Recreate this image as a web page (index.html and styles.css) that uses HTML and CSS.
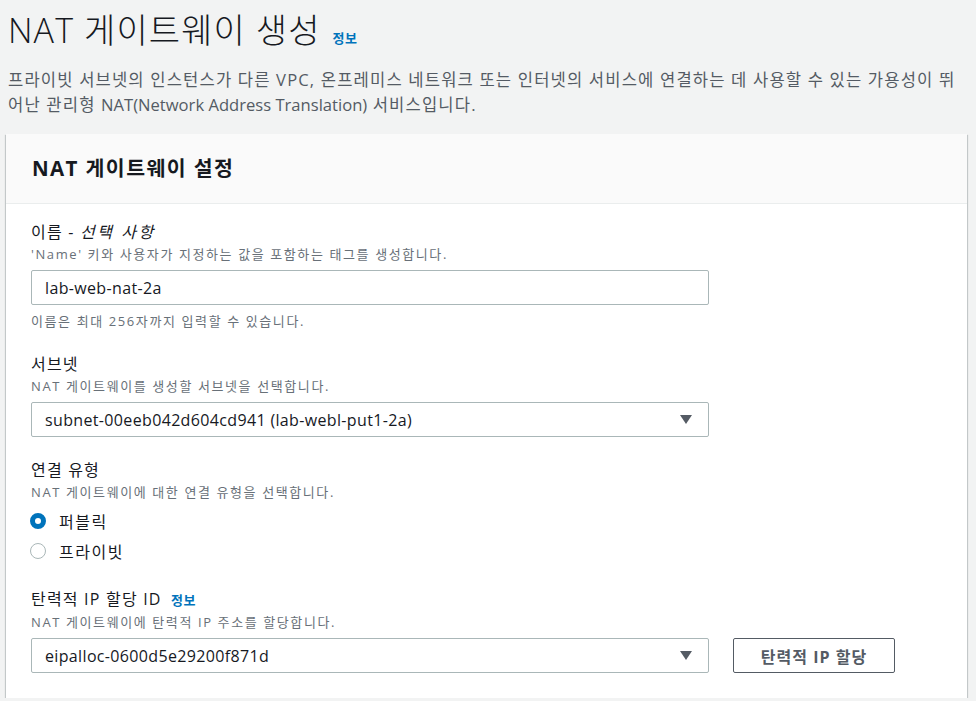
FILE: index.html
```html
<!DOCTYPE html>
<html lang="ko">
<head>
<meta charset="UTF-8">
<title>NAT 게이트웨이 생성</title>
<link rel="stylesheet" href="styles.css">
</head>
<body>
<div class="page">
    <div class="page-head">
        <h1>NAT 게이트웨이 생성 <a class="info" href="#">정보</a></h1>
        <p class="page-desc">프라이빗 서브넷의 인스턴스가 다른 VPC, 온프레미스 네트워크 또는 인터넷의 서비스에 연결하는 데 사용할 수 있는 가용성이 뛰어난 관리형 <span class="en">NAT(Network Address Translation)</span> 서비스입니다.</p>
    </div>

    <div class="card">
        <div class="card-head">NAT 게이트웨이 설정</div>
        <div class="card-body">

            <div class="field">
                <div class="label">이름 - <i>선택 사항</i></div>
                <div class="desc">'Name' 키와 사용자가 지정하는 값을 포함하는 태그를 생성합니다.</div>
                <div class="control">
                    <input class="input" type="text" value="lab-web-nat-2a" spellcheck="false">
                </div>
                <div class="hint">이름은 최대 256자까지 입력할 수 있습니다.</div>
            </div>

            <div class="field">
                <div class="label">서브넷</div>
                <div class="desc">NAT 게이트웨이를 생성할 서브넷을 선택합니다.</div>
                <div class="control">
                    <div class="select">
                        <span>subnet-00eeb042d604cd941 (lab-webl-put1-2a)</span>
                        <i class="caret"></i>
                    </div>
                </div>
            </div>

            <div class="field">
                <div class="label">연결 유형</div>
                <div class="desc">NAT 게이트웨이에 대한 연결 유형을 선택합니다.</div>
                <div class="radios">
                    <label class="radio"><span class="dot checked"></span>퍼블릭</label>
                    <label class="radio"><span class="dot"></span>프라이빗</label>
                </div>
            </div>

            <div class="field">
                <div class="label">탄력적 IP 할당 ID <a class="info" href="#">정보</a></div>
                <div class="desc">NAT 게이트웨이에 탄력적 IP 주소를 할당합니다.</div>
                <div class="control">
                    <div class="select">
                        <span>eipalloc-0600d5e29200f871d</span>
                        <i class="caret"></i>
                    </div>
                    <button class="button">탄력적 IP 할당</button>
                </div>
            </div>

        </div>
    </div>
</div>
</body>
</html>
```

FILE: styles.css
```css
html,body{margin:0;padding:0;}
body{background:#f2f3f3;color:#16191f;font-family:"Open Sans","Noto Sans CJK KR",sans-serif;font-size:16px;}
a{text-decoration:none;}

.page{padding:8px 9px 0 6px;}
.page-head{padding-left:2px;}
h1{margin:0;font-size:34px;font-weight:300;line-height:44px;color:#16191f;letter-spacing:1.1px;}
h1 .info{margin-left:2px;}
.info{font-size:13px;font-weight:700;color:#0073bb;letter-spacing:0.5px;}
.page-desc{margin:7px 0 0;font-size:16.6px;line-height:25px;color:#545b64;letter-spacing:1.15px;}
.page-desc .en{letter-spacing:0;}

.card{margin-top:17px;background:#fff;box-shadow:0 1px 1px 0 rgba(0,28,36,.3),1px 1px 1px 0 rgba(0,28,36,.15),-1px 1px 1px 0 rgba(0,28,36,.15);}
.card-head{height:69px;line-height:68px;padding:0 26px;background:#fafafa;border-bottom:1px solid #eaeded;font-size:20.5px;font-weight:700;letter-spacing:1.4px;}
.card-body{padding:17px 25px 25px;display:flex;flex-direction:column;gap:22px;}

.label{line-height:22px;font-size:16px;letter-spacing:1.2px;}
.label i{font-style:italic;letter-spacing:2.6px;}
.label .info{margin-left:4px;}
.desc,.hint{margin-top:1px;line-height:20px;font-size:13px;color:#687078;letter-spacing:1.6px;}
.hint{margin-top:6px;}

.control{margin-top:6px;display:flex;gap:24px;}
.input,.select{box-sizing:border-box;width:678px;height:35px;border:1px solid #aab7b8;border-radius:2px;background:#fff;padding:0 13px;font-family:inherit;font-size:16px;letter-spacing:0.35px;color:#16191f;}
.input{outline:none;}
.select{display:flex;align-items:center;justify-content:space-between;}
.caret{width:0;height:0;margin-right:3px;border-left:6px solid transparent;border-right:6px solid transparent;border-top:9px solid #545b64;}

.button{box-sizing:border-box;width:162px;height:35px;border:1px solid #545b64;border-radius:2px;background:#fff;color:#545b64;font-family:inherit;font-size:16px;font-weight:700;letter-spacing:1px;}

.radios{margin-top:4px;display:flex;flex-direction:column;}
.radio{display:flex;align-items:center;height:30px;gap:13px;font-size:16px;letter-spacing:1.5px;}
.dot{box-sizing:border-box;width:16px;height:16px;border-radius:50%;border:1px solid #aab7b8;margin-left:-1px;}
.dot.checked{border:5px solid #0073bb;}
```
